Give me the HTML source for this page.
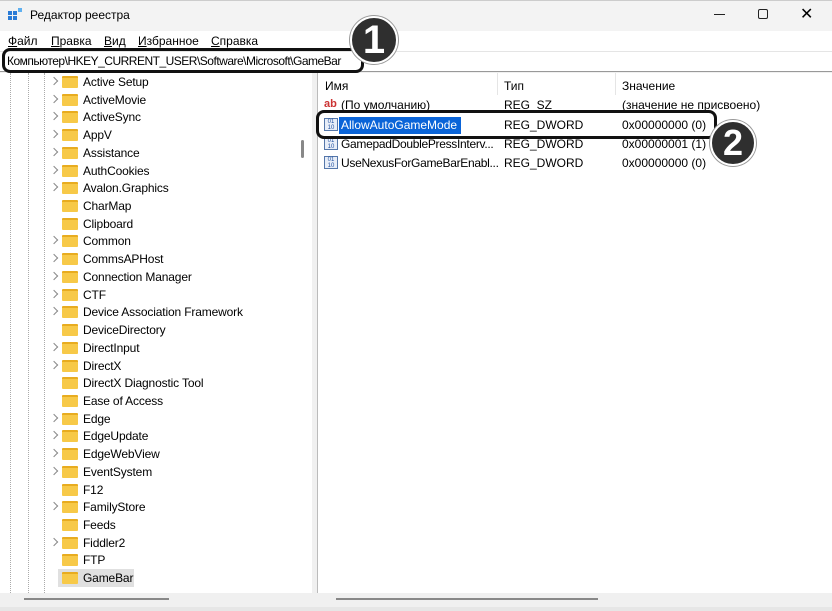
<!DOCTYPE html>
<html><head><meta charset="utf-8"><style>
*{margin:0;padding:0;box-sizing:border-box}
body{width:832px;height:611px;overflow:hidden;background:#f0f0f0;font-family:"Liberation Sans","DejaVu Sans",sans-serif;font-size:12px;color:#000;position:relative}
.abs{position:absolute}
.title{left:0;top:0;width:832px;height:31px;background:#f3f3f3;border-top:1px solid #ccc}
.menu{left:0;top:31px;width:832px;height:20px;background:#fff}
.menu span{position:absolute;top:3px;font-size:12px}
.addr{left:0;top:51px;width:832px;height:21px;background:#fff;border-top:1px solid #e5e5e5;border-bottom:1px solid #999}
.left{left:0;top:73px;width:312px;height:520px;background:#fff}
.right{left:317px;top:73px;width:515px;height:520px;background:#fff;border-left:1px solid #bbb}
.row{position:absolute;left:0;height:18px;font-size:12px;line-height:18px;letter-spacing:-0.15px}
.fold{position:absolute;left:62px;top:3px;width:16px;height:12px;background:#f7c948;border-top:2px solid #e8ac20;border-radius:1px}
.chev{position:absolute;left:51px;top:5px;width:6px;height:6px;border-right:1px solid #888;border-bottom:1px solid #888;transform:rotate(-45deg)}
.t{position:absolute;left:83px}
.dot{position:absolute;top:73px;height:520px;border-left:1px dotted #aaa}
.circ{border-radius:50%;background:#2f2f2f;border:2px solid #fff;color:#fff;font-weight:bold;text-align:center;box-shadow:0 0 0 1px #999}
.ri{position:absolute;left:324px;width:14px;height:13px;border:1px solid #5577aa;background:#e8eef8;font-size:6px;color:#2050a0;line-height:6px;text-align:center}
</style></head><body>
<div class="abs title"></div>
<div class="abs" style="left:8px;top:8px;width:14px;height:14px">
<div class="abs" style="left:0;top:3px;width:4px;height:4px;background:#2a7bd6"></div><div class="abs" style="left:5px;top:3px;width:4px;height:4px;background:#2a7bd6"></div>
<div class="abs" style="left:0;top:8px;width:4px;height:4px;background:#2a7bd6"></div><div class="abs" style="left:5px;top:8px;width:4px;height:4px;background:#2a7bd6"></div>
<div class="abs" style="left:10px;top:0;width:4px;height:4px;background:#5fb0f0"></div></div>
<div class="abs" style="left:30px;top:8px;font-size:12px">Редактор реестра</div>
<div class="abs" style="left:714px;top:14px;width:11px;border-top:1px solid #222"></div>
<div class="abs" style="left:758px;top:9px;width:10px;height:10px;border:1px solid #222;border-radius:2px"></div>
<div class="abs" style="left:800px;top:4px;font-size:16px">✕</div>
<div class="abs menu"><span style="left:8px"><u>Ф</u>айл</span><span style="left:51px"><u>П</u>равка</span><span style="left:104px"><u>В</u>ид</span><span style="left:138px"><u>И</u>збранное</span><span style="left:211px"><u>С</u>правка</span></div>
<div class="abs addr"></div>
<div class="abs" style="left:7px;top:54px;font-size:12px;letter-spacing:-0.5px;white-space:nowrap">Компьютер\HKEY_CURRENT_USER\Software\Microsoft\GameBar</div>
<div class="abs" style="left:2px;top:48px;width:362px;height:25px;border:3px solid #111;border-radius:8px"></div>
<div class="abs circ" style="left:350px;top:16px;width:48px;height:48px;font-size:40px;line-height:44px">1</div>
<div class="abs left"></div>
<div class="dot" style="left:10px"></div><div class="dot" style="left:28px"></div><div class="dot" style="left:44px"></div>
<div class="abs" style="left:301px;top:140px;width:3px;height:18px;background:#888;border-radius:2px"></div>
<div id="tree"></div>
<div class="abs right"></div>
<div class="abs" style="left:497px;top:73px;height:22px;border-left:1px solid #e5e5e5"></div>
<div class="abs" style="left:615px;top:73px;height:22px;border-left:1px solid #e5e5e5"></div>
<div class="abs" style="left:325px;top:79px">Имя</div><div class="abs" style="left:504px;top:79px">Тип</div><div class="abs" style="left:622px;top:79px">Значение</div>
<div class="abs" style="left:324px;top:98px;color:#c33;font-weight:bold;font-size:11px">ab</div>
<div class="abs" style="left:341px;top:98px">(По умолчанию)</div><div class="abs" style="left:504px;top:98px">REG_SZ</div><div class="abs" style="left:622px;top:98px">(значение не присвоено)</div>
<div class="ri" style="top:118px">01<br>10</div>
<div class="abs" style="left:339px;top:117px;width:122px;height:17px;background:#0a64d8"></div>
<div class="abs" style="left:341px;top:118px;color:#fff">AllowAutoGameMode</div><div class="abs" style="left:504px;top:118px">REG_DWORD</div><div class="abs" style="left:622px;top:118px">0x00000000 (0)</div>
<div class="ri" style="top:137px">01<br>10</div>
<div class="abs" style="left:341px;top:137px;letter-spacing:-0.3px">GamepadDoublePressInterv...</div><div class="abs" style="left:504px;top:137px">REG_DWORD</div><div class="abs" style="left:622px;top:137px">0x00000001 (1)</div>
<div class="ri" style="top:156px">01<br>10</div>
<div class="abs" style="left:341px;top:156px;letter-spacing:-0.3px">UseNexusForGameBarEnabl...</div><div class="abs" style="left:504px;top:156px">REG_DWORD</div><div class="abs" style="left:622px;top:156px">0x00000000 (0)</div>
<div class="abs" style="left:316px;top:110px;width:401px;height:29px;border:3px solid #111;border-radius:8px"></div>
<div class="abs circ" style="left:710px;top:120px;width:46px;height:46px;font-size:36px;line-height:42px">2</div>
<div class="abs" style="left:24px;top:598px;width:145px;height:2px;background:#888"></div>
<div class="abs" style="left:336px;top:598px;width:262px;height:2px;background:#888"></div>
<div class="abs" style="left:0;top:607px;width:832px;height:4px;background:#e6e6e6"></div>
<script>
var items=[["Active Setup",1],["ActiveMovie",1],["ActiveSync",1],["AppV",1],["Assistance",1],["AuthCookies",1],["Avalon.Graphics",1],["CharMap",0],["Clipboard",0],["Common",1],["CommsAPHost",1],["Connection Manager",1],["CTF",1],["Device Association Framework",1],["DeviceDirectory",0],["DirectInput",1],["DirectX",1],["DirectX Diagnostic Tool",0],["Ease of Access",0],["Edge",1],["EdgeUpdate",1],["EdgeWebView",1],["EventSystem",1],["F12",0],["FamilyStore",1],["Feeds",0],["Fiddler2",1],["FTP",0],["GameBar",0]];
var h="";items.forEach(function(it,i){var y=73+i*17.72;
h+='<div class="row" style="top:'+y+'px;width:296px">'+(it[0]=="GameBar"?'<div style="position:absolute;left:58px;top:0;width:76px;height:18px;background:#e0e0e0"></div>':'')+(it[1]?'<span class="chev"></span>':'')+'<div class="fold"></div><span class="t">'+it[0]+'</span></div>';});
document.getElementById("tree").innerHTML=h;
</script>
</body></html>
